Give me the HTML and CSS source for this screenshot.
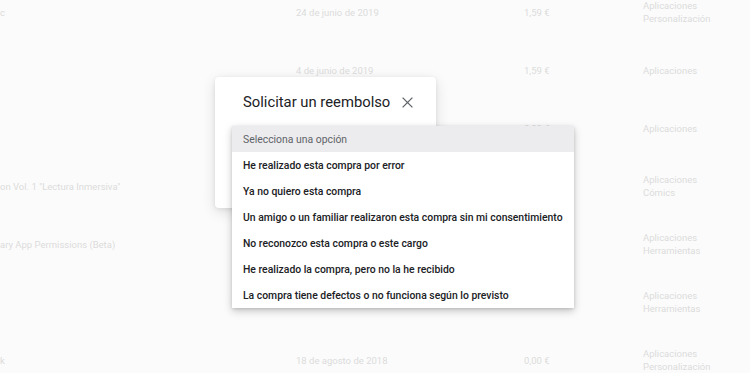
FILE: index.html
```html
<!DOCTYPE html>
<html lang="es">
<head>
<meta charset="utf-8">
<title>Solicitar un reembolso</title>
<link rel="stylesheet" href="styles.css">
</head>
<body>
<div class="table">
  <div class="row">
    <div class="cell name">c</div>
    <div class="cell date">24 de junio de 2019</div>
    <div class="cell price">1,59 €</div>
    <div class="cell cat">Aplicaciones<br>Personalización</div>
  </div>
  <div class="row">
    <div class="cell name"></div>
    <div class="cell date">4 de junio de 2019</div>
    <div class="cell price">1,59 €</div>
    <div class="cell cat">Aplicaciones</div>
  </div>
  <div class="row">
    <div class="cell name"></div>
    <div class="cell date"></div>
    <div class="cell price">0,00 €</div>
    <div class="cell cat">Aplicaciones</div>
  </div>
  <div class="row">
    <div class="cell name">on Vol. 1 "Lectura Inmersiva"</div>
    <div class="cell date"></div>
    <div class="cell price"></div>
    <div class="cell cat">Aplicaciones<br>Cómics</div>
  </div>
  <div class="row">
    <div class="cell name">ary App Permissions (Beta)</div>
    <div class="cell date"></div>
    <div class="cell price"></div>
    <div class="cell cat">Aplicaciones<br>Herramientas</div>
  </div>
  <div class="row">
    <div class="cell name"></div>
    <div class="cell date"></div>
    <div class="cell price"></div>
    <div class="cell cat">Aplicaciones<br>Herramientas</div>
  </div>
  <div class="row">
    <div class="cell name">k</div>
    <div class="cell date">18 de agosto de 2018</div>
    <div class="cell price">0,00 €</div>
    <div class="cell cat">Aplicaciones<br>Personalización</div>
  </div>
</div>

<div class="dialog">
  <div class="dialog-head">
    <h2 class="dialog-title">Solicitar un reembolso</h2>
    <svg class="close" width="11" height="11" viewBox="0 0 11 11" aria-hidden="true">
      <path d="M0.6 0.6 L10.4 10.4 M10.4 0.6 L0.6 10.4" stroke="#5f6368" stroke-width="1.3" fill="none"/>
    </svg>
  </div>
</div>

<div class="menu">
  <div class="option placeholder">Selecciona una opción</div>
  <div class="option">He realizado esta compra por error</div>
  <div class="option">Ya no quiero esta compra</div>
  <div class="option">Un amigo o un familiar realizaron esta compra sin mi consentimiento</div>
  <div class="option">No reconozco esta compra o este cargo</div>
  <div class="option">He realizado la compra, pero no la he recibido</div>
  <div class="option">La compra tiene defectos o no funciona según lo previsto</div>
</div>
</body>
</html>
```

FILE: styles.css
```css
html, body {
  margin: 0;
  padding: 0;
}
body {
  width: 750px;
  height: 373px;
  overflow: hidden;
  background: #fbfbfb;
  font-family: Roboto, "Noto Sans", Arial, sans-serif;
  position: relative;
}
.table {
  margin-top: -17px;
  display: flex;
  flex-direction: column;
}
.row {
  height: 58px;
  display: grid;
  grid-template-columns: 296px 228px 119px 1fr;
  align-items: center;
  font-size: 9.5px;
  line-height: 13px;
  color: #dcdcdc;
}
.cell {
  white-space: nowrap;
  overflow: hidden;
}
.dialog {
  position: absolute;
  left: 215px;
  top: 77px;
  width: 221px;
  height: 131px;
  background: #ffffff;
  border-radius: 4px;
  box-shadow: 0 4px 14px rgba(0,0,0,0.12), 0 1px 4px rgba(0,0,0,0.08);
  box-sizing: border-box;
  padding: 14px 0 0 28px;
}
.dialog-head {
  display: flex;
  align-items: center;
  gap: 12px;
  height: 22px;
}
.dialog-title {
  margin: 0;
  font-size: 14.8px;
  font-weight: 400;
  color: #202124;
  line-height: 22px;
  white-space: nowrap;
}
.close {
  display: block;
}
.menu {
  position: absolute;
  left: 232px;
  top: 126px;
  width: 342px;
  background: #ffffff;
  box-shadow: 0 3px 8px rgba(0,0,0,0.22), 0 1px 3px rgba(0,0,0,0.12);
  display: flex;
  flex-direction: column;
}
.option {
  height: 26px;
  box-sizing: border-box;
  padding: 2px 0 0 11px;
  line-height: 24px;
  font-size: 10.4px;
  font-weight: 500;
  color: #202124;
  white-space: nowrap;
}
.option.placeholder {
  background: #ececee;
  color: #5f6368;
  font-weight: 400;
}
```
